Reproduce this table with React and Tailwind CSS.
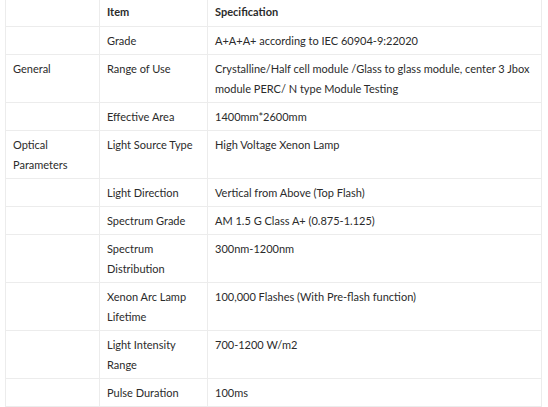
import React from 'react';

const rows = [
  { group: '', item: 'Grade', spec: 'A+A+A+ according to IEC 60904-9:22020' },
  { group: 'General', item: 'Range of Use', spec: 'Crystalline/Half cell module /Glass to glass module, center 3 Jbox module PERC/ N type Module Testing' },
  { group: '', item: 'Effective Area', spec: '1400mm*2600mm' },
  { group: 'Optical Parameters', item: 'Light Source Type', spec: 'High Voltage Xenon Lamp' },
  { group: '', item: 'Light Direction', spec: 'Vertical from Above (Top Flash)' },
  { group: '', item: 'Spectrum Grade', spec: 'AM 1.5 G Class A+ (0.875-1.125)' },
  { group: '', item: 'Spectrum Distribution', spec: '300nm-1200nm' },
  { group: '', item: 'Xenon Arc Lamp Lifetime', spec: '100,000 Flashes (With Pre-flash function)' },
  { group: '', item: 'Light Intensity Range', spec: '700-1200 W/m2' },
  { group: '', item: 'Pulse Duration', spec: '100ms' },
];

const cell = 'border border-[#ececec] align-top pl-[7px] pr-[6px] pt-[4px] pb-[3px]';

export default function App() {
  return (
    <div className="w-[548px] h-[407px] overflow-hidden bg-white pl-[5px] pr-[7px]" style={{ fontFamily: 'Lato, "Noto Sans", sans-serif' }}>
      <table className="w-[537px] border-collapse table-fixed text-[11px] leading-[20px] text-[#2b2b2b]">
        <colgroup>
          <col className="w-[94px]" />
          <col className="w-[108px]" />
          <col />
        </colgroup>
        <thead>
          <tr>
            <th className="border border-t-0 border-[#ececec] h-[26px] pl-[7px] pt-0 pb-[1px] align-middle"></th>
            <th className="border border-t-0 border-[#ececec] h-[26px] pl-[7px] pt-0 pb-[1px] align-middle text-left font-bold">Item</th>
            <th className="border border-t-0 border-[#ececec] h-[26px] pl-[7px] pt-0 pb-[1px] align-middle text-left font-bold">Specification</th>
          </tr>
        </thead>
        <tbody>
          {rows.map((r) => (
            <tr key={r.item}>
              <td className={cell}>{r.group}</td>
              <td className={cell}>{r.item}</td>
              <td className={cell}>{r.spec}</td>
            </tr>
          ))}
        </tbody>
      </table>
    </div>
  );
}
